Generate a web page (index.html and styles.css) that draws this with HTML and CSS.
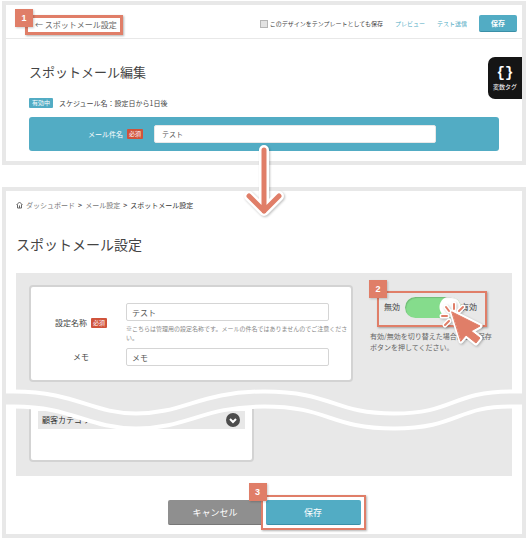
FILE: index.html
```html
<!DOCTYPE html>
<html lang="ja">
<head>
    <meta charset="UTF-8">
    <meta name="viewport" content="width=device-width, initial-scale=1.0">
    <link rel="stylesheet" href="styles.css">
    <title>スポットメール設定</title>
</head>
<body>

    <section class="panel panel-edit">
        <header class="toolbar">
            <div class="callout callout-back">
                <span class="number">1</span>
                <a href="#settings" class="back">← スポットメール設定</a>
            </div>
            <div class="toolbar-right">
                <label class="template"><input type="checkbox" class="check">このデザインをテンプレートとしても保存</label>
                <a href="#preview">プレビュー</a>
                <a href="#test">テスト送信</a>
                <button type="button" class="btn-save-small">保存</button>
            </div>
        </header>

        <div class="edit-body">
            <h1 class="edit-title">スポットメール編集</h1>
            <p class="status"><span class="status-tag">有効中</span>スケジュール名：設定日から1日後</p>
            <div class="subject">
                <label for="subject">メール件名</label>
                <span class="required">必須</span>
                <input type="text" id="subject" value="テスト">
            </div>
        </div>

        <button type="button" class="tag-button"><span class="braces">{}</span>変数タグ</button>
    </section>

    <!-- arrow from the first screen to the second -->
    <svg class="arrow" width="50" height="80" viewBox="0 0 50 80" fill="none" stroke-linecap="round" stroke-linejoin="round">
        <path d="M25 10V71M10 56L25 71L40 56" stroke="#fff" stroke-width="10"/>
        <path d="M25 10V71M10 56L25 71L40 56" stroke="#e07e68" stroke-width="5"/>
    </svg>

    <section class="panel panel-settings" id="settings">
        <nav class="breadcrumb">
            <svg width="7" height="8" viewBox="0 0 14 16" fill="none" stroke="#666" stroke-width="2">
                <path d="M1 8L7 2L13 8M3 7V14H11V7M7 14V9"/>
            </svg>
            <a href="#dashboard">ダッシュボード</a>
            <b>&gt;</b>
            <a href="#mail">メール設定</a>
            <b>&gt;</b>
            <span class="current">スポットメール設定</span>
        </nav>
        <h2 class="settings-title">スポットメール設定</h2>

        <div class="settings-area">
            <div class="settings-row">
                <form class="card card-form">
                    <div class="field-label">
                        <label for="name">設定名称</label>
                        <span class="required">必須</span>
                    </div>
                    <div class="field">
                        <input type="text" id="name" value="テスト">
                        <p class="note">※こちらは管理用の設定名称です。メールの件名ではありませんのでご注意ください。</p>
                    </div>
                    <div class="field-label"><label for="memo">メモ</label></div>
                    <div class="field"><input type="text" id="memo" placeholder="メモ"></div>
                </form>

                <div class="side">
                    <div class="callout callout-toggle">
                        <span class="number">2</span>
                        <span>無効</span>
                        <input type="checkbox" class="toggle" id="enabled" checked>
                        <label for="enabled">有効</label>
                        <svg class="cursor" width="50" height="50" viewBox="0 0 50 50" stroke-linejoin="round" stroke-linecap="round">
                            <g fill="none" stroke="#fff" stroke-width="5">
                                <path d="M11 12L14 16M19 9V14M28 12L24 16M7 21H12M10 30L14 26"/>
                                <path d="M17 17L45 31L36 36L45 43L41 48L31 40L26 46Z"/>
                            </g>
                            <path d="M11 12L14 16M19 9V14M28 12L24 16M7 21H12M10 30L14 26" fill="none" stroke="#e07e68" stroke-width="2"/>
                            <path d="M17 17L45 31L36 36L45 43L41 48L31 40L26 46Z" fill="#e07e68" stroke="#e07e68"/>
                        </svg>
                    </div>
                    <p class="side-note">有効/無効を切り替えた場合は必ず保存ボタンを押してください。</p>
                </div>
            </div>

            <div class="card card-category">
                <div class="category">
                    <span>顧客カテゴリ</span>
                    <svg width="14" height="14" viewBox="0 0 14 14">
                        <circle cx="7" cy="7" r="7" fill="#4c4c4c"/>
                        <path d="M4 6L7 9L10 6" fill="none" stroke="#fff" stroke-width="2"/>
                    </svg>
                </div>
            </div>
        </div>

        <!-- wave showing that part of the screen is left out -->
        <svg class="wave" viewBox="0 0 516 50" preserveAspectRatio="none">
            <path d="M10 5H506V12C450 12 440 35 388 35C335 35 325 12 259 12C205 12 180 35 130 35C85 35 60 10 10 12Z" fill="#e8e8e8"/>
            <g fill="none">
                <path d="M0 14H8C68 14 84 36 130 36C180 36 195 14 258 14C325 14 325 36 388 36C450 36 448 14 505 14H516" stroke="#fff" stroke-width="19"/>
                <path d="M0 14H8C68 14 84 36 130 36C180 36 195 14 258 14C325 14 325 36 388 36C450 36 448 14 505 14H516" stroke="#e8e8e8" stroke-width="11"/>
            </g>
        </svg>

        <div class="actions">
            <button type="button" class="btn btn-cancel">キャンセル</button>
            <div class="callout callout-save">
                <span class="number">3</span>
                <button type="submit" class="btn btn-save">保存</button>
            </div>
        </div>
    </section>

</body>
</html>
```
FILE: styles.css
```css
* {
    box-sizing: border-box;
}

body {
    margin: 0;
    padding: 1px 2px;
    position: relative;
    background-color: #fff;
    color: #444;
    font-family: "Noto Sans CJK JP", sans-serif;
    font-size: 8px;
    line-height: 10px;
}

h1, h2, p {
    margin: 0;
    font-weight: normal;
}

a {
    color: #52acc4;
    text-decoration: none;
}

button, input {
    font-family: inherit;
}

button {
    border: none;
    padding: 0;
    color: #fff;
}

input[type="text"] {
    display: block;
    height: 18px;
    padding: 0 5px;
    border: 1px solid #d5d5d5;
    border-radius: 2px;
    background-color: #fff;
    color: #555;
    font-size: 8px;
}

input::placeholder {
    color: #555;
}

.panel {
    position: relative;
    border: 4px solid #e8e8e8;
    background-color: #fff;
}

/* numbered frames */
.callout {
    position: relative;
    display: flex;
    align-items: center;
    border: 2px solid #e07e68;
    box-shadow: 1px 1px 2px rgba(0, 0, 0, 0.3);
}

.number {
    position: absolute;
    top: -12px;
    left: -12px;
    width: 18px;
    height: 18px;
    background-color: #e07e68;
    color: #fff;
    font: bold 9px/18px "Liberation Sans", sans-serif;
    text-align: center;
    box-shadow: 1px 1px 2px rgba(0, 0, 0, 0.2);
}

.required {
    padding: 0 2px;
    border-radius: 1px;
    background-color: #d0533b;
    color: #fff;
    font-size: 6px;
}

/* mail edit screen */
.panel-edit {
    margin-bottom: 22px;
}

.toolbar {
    display: flex;
    justify-content: space-between;
    height: 34px;
    padding: 10px 5px 0 19px;
    border-bottom: 1px solid #e8e8e8;
}

.callout-back {
    height: 20px;
    padding: 0 3px 0 7px;
    border-width: 3px;
}

.callout-back .number {
    top: -9px;
    left: -13px;
}

.back {
    color: #666;
}

.toolbar-right {
    display: flex;
    align-items: center;
    gap: 12px;
    height: 17px;
    font-size: 6px;
}

.template {
    display: flex;
    align-items: center;
    gap: 2px;
}

.check {
    appearance: none;
    width: 8px;
    height: 8px;
    margin: 0;
    border: 1px solid #b5b5b5;
    background-color: #e2e2e2;
}

.btn-save-small {
    width: 38px;
    height: 17px;
    border-bottom: 1px solid #3a8fa7;
    border-radius: 2px;
    background-color: #52acc4;
    font-size: 7px;
    font-weight: bold;
}

.edit-body {
    padding: 23px 23px 10px;
}

.edit-title {
    font-size: 13px;
    line-height: 20px;
}

.status {
    display: flex;
    align-items: center;
    gap: 6px;
    height: 11px;
    margin-top: 15px;
    font-size: 7px;
}

.status-tag {
    padding: 0 3px;
    border-radius: 1px;
    background-color: #52acc4;
    color: #fff;
    font-size: 6px;
}

.subject {
    display: flex;
    align-items: center;
    gap: 4px;
    height: 34px;
    margin-top: 9px;
    padding: 0 63px 0 59px;
    border-radius: 3px;
    background-color: #52acc4;
    color: #fff;
}

.subject label {
    font-size: 7px;
}

.subject input {
    flex: 1;
    min-width: 0;
    margin-left: 7px;
    padding: 0 7px;
    border-color: #e8e8e8;
    font-size: 7px;
}

.tag-button {
    position: absolute;
    top: 52px;
    right: 0;
    width: 34px;
    height: 42px;
    border-radius: 7px 0 0 7px;
    background-color: #151515;
    font-size: 6px;
    line-height: 10px;
}

.braces {
    display: block;
    font: bold 14px/18px "Liberation Mono", monospace;
}

.arrow {
    position: absolute;
    z-index: 2;
    top: 140px;
    left: calc(50% - 25px);
    filter: drop-shadow(1px 1px 1px rgba(0, 0, 0, 0.25));
}

/* mail settings screen */
.panel-settings {
    padding: 9px 10px 4px;
}

.breadcrumb {
    display: flex;
    align-items: center;
    gap: 3px;
    font-size: 7px;
}

.breadcrumb a {
    color: #777;
}

.current {
    color: #333;
}

.settings-title {
    margin: 24px 0 19px;
    font-size: 14px;
    line-height: 20px;
}

.settings-area {
    padding: 12px 14px 14px 13px;
    background-color: #e8e8e8;
}

.settings-row {
    display: flex;
    align-items: flex-start;
    gap: 16px;
}

.card {
    border: 2px solid #d3d3d3;
    border-radius: 4px;
    background-color: #fff;
}

.card-form {
    flex: 1;
    display: grid;
    grid-template-columns: 95px 1fr;
    row-gap: 6px;
    padding: 16px 2px 14px 0;
}

.field-label {
    display: flex;
    align-items: center;
    justify-content: center;
    gap: 4px;
    padding-left: 5px;
}

.field input {
    width: 91%;
}

.note {
    margin-top: 3px;
    color: #888;
    font-size: 6px;
    line-height: 9px;
}

.side {
    width: 129px;
}

.callout-toggle {
    width: 110px;
    height: 36px;
    margin: 6px 0 4px 8px;
    padding: 0 0 4px 5px;
}

.callout-toggle .number {
    top: -13px;
    left: -10px;
}

.toggle {
    appearance: none;
    width: 56px;
    height: 21px;
    margin: 0 0 0 5px;
    border-radius: 11px;
    background: radial-gradient(circle at 45px 10px, #fff 10px, transparent 11px) #85dc8c;
    box-shadow: inset 1px 1px 1px rgba(0, 0, 0, 0.15);
}

.cursor {
    position: absolute;
    top: 2px;
    left: 56px;
    filter: drop-shadow(1px 1px 1px rgba(0, 0, 0, 0.25));
    overflow: visible;
}

.side-note {
    padding-left: 1px;
    color: #666;
    font-size: 7px;
    line-height: 11px;
}

.card-category {
    width: 48%;
    margin-top: 18px;
    padding: 9px 7px 31px;
}

.category {
    display: flex;
    align-items: center;
    justify-content: space-between;
    height: 18px;
    padding: 0 5px 0 4px;
    background-color: #e8e8e8;
    color: #333;
}

.wave {
    position: absolute;
    top: 194px;
    left: 0;
    width: 100%;
    height: 50px;
}

.actions {
    display: flex;
    justify-content: center;
    align-items: center;
    padding: 19px 0 0 5px;
}

.btn {
    width: 95px;
    height: 25px;
    border-radius: 2px;
    font-size: 9px;
}

.btn-cancel {
    border-bottom: 1px solid #777;
    background-color: #8f8f8f;
}

.btn-save {
    border-bottom: 1px solid #3a8fa7;
    background-color: #52acc4;
}

.callout-save {
    height: 35px;
    margin-left: -2px;
    padding: 3px;
    background-color: #fff;
}

.callout-save .number {
    top: -14px;
    left: -14px;
}
```
